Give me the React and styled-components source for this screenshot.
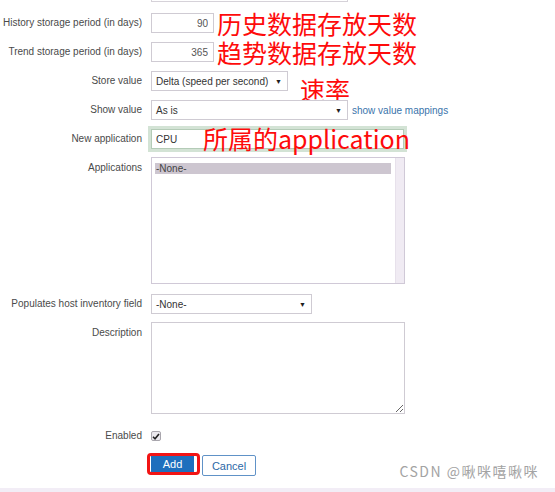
import React from "react";
import styled, { createGlobalStyle, css } from "styled-components";

const Global = createGlobalStyle`
  html, body { margin: 0; padding: 0; background: #fff; }
  body { width: 555px; height: 492px; overflow: hidden; font-family: "Liberation Sans", Arial, sans-serif; }
`;

const Page = styled.div`
  position: relative;
  width: 555px;
  height: 492px;
  display: flex;
  flex-direction: column;
  background: #fff;
`;

const Form = styled.div`
  display: flex;
  flex-direction: column;
`;

const CutField = styled.div`
  margin-left: 151px;
  width: 195px;
  height: 1px;
  border: 1px solid #d6d2d9;
  border-top: none;
`;

const Row = styled.div`
  display: grid;
  grid-template-columns: 142px 1fr;
  column-gap: 9px;
  margin-top: ${(p) => p.$mt}px;
`;

const Label = styled.div`
  text-align: right;
  font-size: 10px;
  color: #4a4a4a;
  line-height: ${(p) => p.$lh}px;
  padding-top: ${(p) => p.$pt || 0}px;
  white-space: nowrap;
`;

const Cell = styled.div`
  position: relative;
  display: flex;
  align-items: ${(p) => p.$align || "center"};
  gap: ${(p) => p.$gap || 0}px;
`;

const TextInput = styled.input`
  box-sizing: border-box;
  width: ${(p) => p.$w}px;
  height: 20px;
  margin: 0;
  border: 1px solid #cfcbd3;
  border-radius: 0;
  padding: 0 ${(p) => (p.$align === "right" ? 5 : 4)}px;
  font: 10px "Liberation Sans", Arial, sans-serif;
  color: ${(p) => (p.$align === "right" ? "#555" : "#333")};
  text-align: ${(p) => p.$align || "left"};
  background: #fff;
  outline: none;
  ${(p) =>
    p.$focus &&
    css`
      border-color: #b4cbb7;
      box-shadow: 0 0 0 3px #d3e3d5;
    `}
`;

const Select = styled.div`
  box-sizing: border-box;
  width: ${(p) => p.$w}px;
  height: 20px;
  border: 1px solid #cfcbd3;
  display: flex;
  align-items: center;
  justify-content: space-between;
  padding: 0 5px 0 4px;
  font-size: 10px;
  color: #333;
  background: #fff;
`;

const Arrow = styled.span`
  font-size: 7px;
  color: #1e1e1e;
`;

const Link = styled.a`
  font-size: 10px;
  color: #3a74ab;
  text-decoration: none;
  white-space: nowrap;
`;

const Note = styled.span`
  font-family: "Noto Sans CJK SC", "Liberation Sans", sans-serif;
  font-size: 25px;
  line-height: 20px;
  color: #fe0b0b;
  white-space: nowrap;
  ${(p) =>
    p.$over &&
    css`
      position: absolute;
      left: ${p.$x}px;
      top: ${p.$y}px;
      line-height: 25px;
    `}
`;

const ListBox = styled.div`
  box-sizing: border-box;
  width: 254px;
  height: 127px;
  border: 1px solid #d0c9d7;
  display: flex;
  background: #fff;
`;

const Options = styled.div`
  flex: 1;
  padding: 5px 4px 0 3px;
`;

const Option = styled.div`
  height: 11px;
  line-height: 11px;
  font-size: 10px;
  color: #444;
  padding-left: 1px;
  background: ${(p) => (p.$sel ? "#cdc6d0" : "transparent")};
`;

const Track = styled.div`
  width: 8px;
  background: #f0ebf3;
  border-left: 1px solid #e7e1eb;
`;

const TextArea = styled.textarea`
  box-sizing: border-box;
  width: 254px;
  height: 92px;
  margin: 0;
  border: 1px solid #cfcbd3;
  border-radius: 0;
  outline: none;
  background: #fff;
  font: 10px "Liberation Sans", Arial, sans-serif;
`;

const Check = styled.span`
  box-sizing: border-box;
  width: 10px;
  height: 10px;
  border: 1px solid #a9a6ad;
  border-radius: 2px;
  background: #ebe9ee;
  display: flex;
  align-items: center;
  justify-content: center;
`;

const Highlight = styled.span`
  display: inline-flex;
  margin-left: -4px;
  border: 3px solid #f21414;
  border-radius: 4px;
  padding-right: 3px;
  background: #fff;
`;

const PrimaryButton = styled.button`
  height: 16px;
  width: 43px;
  margin: 0 0 0 1px;
  padding: 0;
  border: none;
  background: #1e6fbd;
  color: #fff;
  font: 11px "Liberation Sans", Arial, sans-serif;
`;

const SecondaryButton = styled.button`
  box-sizing: border-box;
  height: 21px;
  width: 54px;
  margin: 2px 0 0 0;
  padding: 0;
  border: 1px solid #6092c7;
  border-radius: 2px;
  background: #fff;
  color: #2c68a6;
  font: 11px "Liberation Sans", Arial, sans-serif;
`;

const Watermark = styled.div`
  position: absolute;
  right: 16px;
  bottom: 11px;
  font-family: "Noto Sans CJK SC", "Liberation Sans", sans-serif;
  font-size: 14px;
  letter-spacing: 1.5px;
  color: #a3a3a3;
  white-space: nowrap;
`;

const FooterStrip = styled.div`
  margin-top: auto;
  height: 4px;
  background: #f2edf6;
`;

export default function App() {
  return (
    <>
      <Global />
      <Page>
        <Form>
          <CutField />
          <Row $mt={11}>
            <Label $lh={20}>History storage period (in days)</Label>
            <Cell $gap={3}>
              <TextInput $w={63} $align="right" defaultValue="90" readOnly />
              <Note>历史数据存放天数</Note>
            </Cell>
          </Row>
          <Row $mt={9}>
            <Label $lh={20}>Trend storage period (in days)</Label>
            <Cell $gap={3}>
              <TextInput $w={63} $align="right" defaultValue="365" readOnly />
              <Note>趋势数据存放天数</Note>
            </Cell>
          </Row>
          <Row $mt={9}>
            <Label $lh={20}>Store value</Label>
            <Cell>
              <Select $w={137}>
                <span>Delta (speed per second)</span>
                <Arrow>▼</Arrow>
              </Select>
              <Note $over $x={149} $y={6}>速率</Note>
            </Cell>
          </Row>
          <Row $mt={9}>
            <Label $lh={20}>Show value</Label>
            <Cell $gap={4}>
              <Select $w={197}>
                <span>As is</span>
                <Arrow>▼</Arrow>
              </Select>
              <Link href="#">show value mappings</Link>
            </Cell>
          </Row>
          <Row $mt={9}>
            <Label $lh={20}>New application</Label>
            <Cell>
              <TextInput $w={253} $focus defaultValue="CPU" readOnly />
              <Note $over $x={52} $y={-3}>所属的application</Note>
            </Cell>
          </Row>
          <Row $mt={8}>
            <Label $lh={12} $pt={5}>Applications</Label>
            <Cell $align="flex-start">
              <ListBox>
                <Options>
                  <Option $sel>-None-</Option>
                </Options>
                <Track />
              </ListBox>
            </Cell>
          </Row>
          <Row $mt={10}>
            <Label $lh={20}>Populates host inventory field</Label>
            <Cell>
              <Select $w={161}>
                <span>-None-</span>
                <Arrow>▼</Arrow>
              </Select>
            </Cell>
          </Row>
          <Row $mt={8}>
            <Label $lh={12} $pt={5}>Description</Label>
            <Cell $align="flex-start">
              <TextArea readOnly />
            </Cell>
          </Row>
          <Row $mt={17}>
            <Label $lh={10}>Enabled</Label>
            <Cell>
              <Check>
                <svg width="8" height="7" viewBox="0 0 8 7">
                  <path d="M1 3.8 L3 5.8 L7 1" fill="none" stroke="#222" strokeWidth="1.6" />
                </svg>
              </Check>
            </Cell>
          </Row>
          <Row $mt={12}>
            <span />
            <Cell $align="flex-start" $gap={2}>
              <Highlight>
                <PrimaryButton>Add</PrimaryButton>
              </Highlight>
              <SecondaryButton>Cancel</SecondaryButton>
            </Cell>
          </Row>
        </Form>
        <Watermark>CSDN @啾咪嘻啾咪</Watermark>
        <FooterStrip />
      </Page>
    </>
  );
}
